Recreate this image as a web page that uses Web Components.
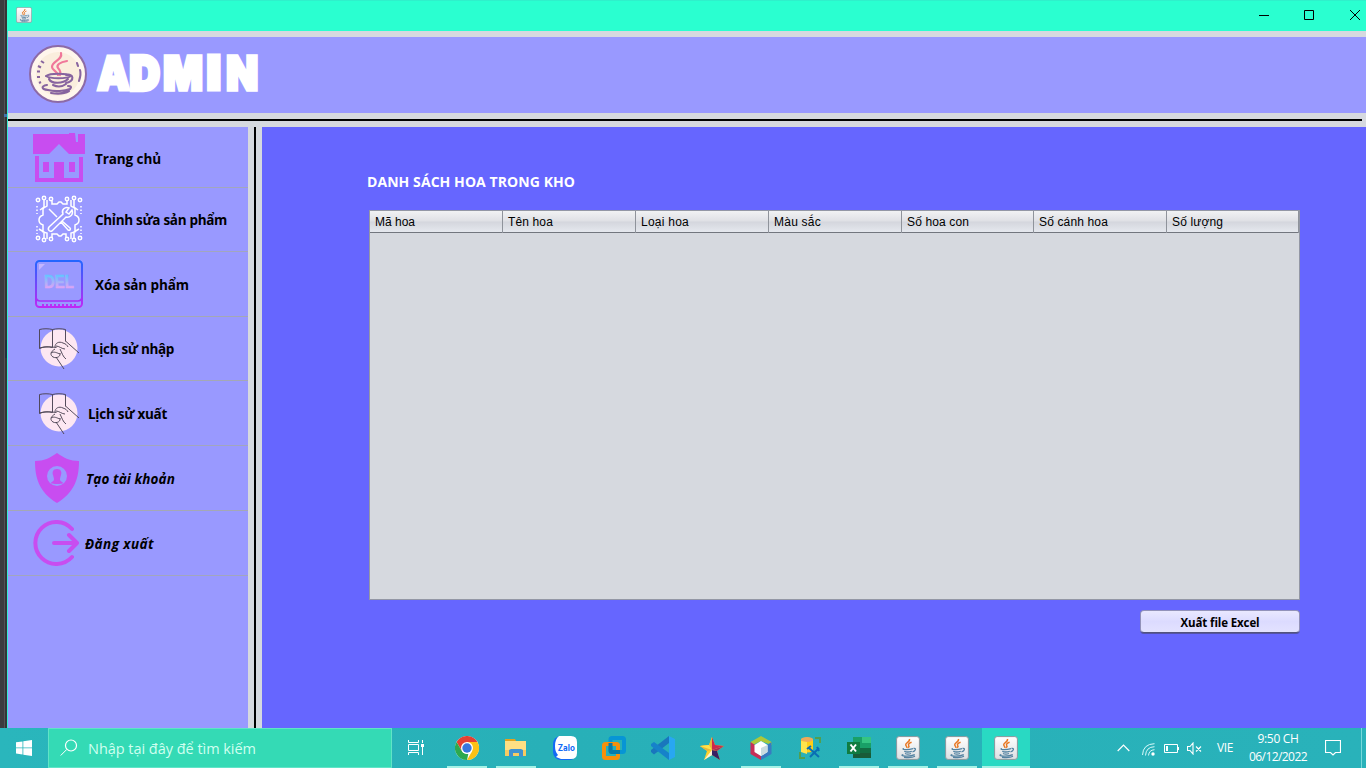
<!DOCTYPE html>
<html lang="vi"><head><meta charset="utf-8"><title>Admin</title>
<style>html,body{margin:0;height:100%;overflow:hidden;background:#3b3b3c}body{font-family:"Open Sans","Noto Sans",sans-serif}</style></head>
<body><desktop-screen></desktop-screen>
<script>
const icons={
java:`<svg viewBox="0 0 24 24"><defs><linearGradient id="g" x2="0" y2="1"><stop stop-color="#fff"/><stop offset="1" stop-color="#dcdfe2"/></linearGradient></defs><rect x=".6" y=".6" width="22.8" height="22.8" rx="2.5" fill="url(#g)" stroke="#8b979d"/><g fill="none" stroke="#e87722" stroke-width="1.5"><path d="M13.4 3c1.2 2.8-4 3.5-3.7 5.8.1 1.300 1.500 1.600 1.200 3.200M15.600 6.200c-2.500.8-3.700 2-2.900 3.200.8 1 .2 1.700-.5 2.300"/></g><g fill="none" stroke="#5382a1" stroke-width="1.300"><path d="M8 12.500c-3.500 1 3.500 1.700 9 .1M8.300 15.200c1.700 1 5.200.8 7.500.1M9 17.500c1.500.8 4.300.7 6 0M17.500 12.400c3-.7 2.300 2.700-1 3.400M7.300 18.500c-5 1.500 6 2.700 11.500.2M8 21.300c4 .5 9 .1 11-1"/></g></svg>`,
badge:`<svg viewBox="0 0 58 58"><circle cx="29" cy="29" r="28" fill="#fff6ec" stroke="#8d6aa6" stroke-width="2"/><circle cx="29" cy="29" r="22" fill="#faeedd"/><g fill="none" stroke="#f0779a" stroke-width="2.200" stroke-linecap="round"><path d="M32 8c2 7-9 8-9 14 0 3 5 4 6 8M38 16c-7 1-11 4-9 7 2 2 3 4 2 7"/></g><g fill="none" stroke="#87649f" stroke-width="2.100" stroke-linecap="round"><path d="M17 31c4-3 21-3 25 0-4 3-21 3-25 0M20 34c2 5 14 5 19 0M24 40c4 2 9 2 13-1M37 30c8-2 9 6 0 8M18 40c-6 1-6 4 1 5 7 2 17 1 22-1 2-2 1-3-2-3M22 48c6 1 13 1 18-2M48 18l1 3M51 25c1 3 0 8-1 11"/></g><path d="M12 16l3 2M9 21l3 1.500M8 26.500h3M8 32h3M10 38l2-1" stroke="#87649f" stroke-width="2"/></svg>`,
home:`<svg viewBox="0 0 52 50"><g fill="#c84df0"><path d="M0 2h36V1h6l1 9h2V2h7v20H36L26 12 16 22H0zM2 24h4v22h15V30h10v16h15V25h4v25H2z"/><path d="M10 30h6v10h-6zM36 30h6v10h-6z"/></g></svg>`,
tools:`<svg viewBox="0 0 48 48"><g fill="none" stroke="#fff" stroke-width="1.500"><path d="M17 6v3h5l2-2h2l2 2h4V6M12 5v6c-1 1-3 1-4 3v6c-3 1-4 3-4 5s1 4 4 5v7l4 1v6M36 5v6c1 1 3 1 4 3v6c3 1 4 3 4 5s-1 4-4 5v7l-4 1v6M17 43v-4h5l2 2h2l2-2h3v4M9 4v8l-4 3M39 4v8l4 3M9 44v-7l-5-3M39 44v-7l5-3"/><g fill="#9999ff"><circle cx="3" cy="5" r="1.700"/><circle cx="9" cy="3" r="1.700"/><circle cx="16" cy="4" r="1.700"/><circle cx="32" cy="4" r="1.700"/><circle cx="39" cy="3" r="1.700"/><circle cx="45" cy="5" r="1.700"/><circle cx="3" cy="43" r="1.700"/><circle cx="9" cy="45" r="1.700"/><circle cx="16" cy="44" r="1.700"/><circle cx="32" cy="44" r="1.700"/><circle cx="39" cy="45" r="1.700"/><circle cx="45" cy="43" r="1.700"/></g><path d="M14 14l8 8M26 27l7 8c2 1 3-1 2-2l-8-7M14 32l14-13c-2-4 2-8 6-6l-3 4 3 2 3-4c2 5-3 8-6 7L17 36c-2 1-5-1-3-4z"/><path stroke-dasharray="1.500 2" d="M2 11v8M46 11v8M2 31v8M46 31v8"/></g></svg>`,
del:`<svg viewBox="0 0 48 48"><defs><linearGradient id="d" x2="0" y2="1"><stop stop-color="#2366ff"/><stop offset="1" stop-color="#be28f5"/></linearGradient><linearGradient id="e" x2="0" y2="1"><stop offset=".2" stop-color="#64c5ff"/><stop offset=".8" stop-color="#dda3f4"/></linearGradient></defs><rect x="1" y="1" width="46" height="46" rx="3.500" fill="none" stroke="url(#d)" stroke-width="2"/><path d="M1 38q1 3 4 3h38q3 0 4-3" fill="none" stroke="#a72ef8" stroke-width="1.700"/><path d="M7 45h34" stroke="#ba2ef8" stroke-width="2" stroke-dasharray="2 2"/><path d="M4 4h6L4 10z" fill="#c4b5ff"/><text x="9" y="28" font-family="Liberation Sans" font-weight="bold" font-size="19" textLength="30" lengthAdjust="spacingAndGlyphs" fill="url(#e)" stroke="url(#e)" stroke-width=".5">DEL</text></svg>`,
book:`<svg viewBox="0 0 42 42"><circle cx="21" cy="20" r="18.500" fill="#fde7f2"/><g fill="none" stroke="#4c4353" stroke-width=".95"><path d="M1.500 1.500c4-1 9-1 13 0v18c-4-1-9-1-13 1zM14.500 1.500c4-1 9-1 13 0v12M1.500 20c6-2 12-1 17-.500M27.500 13l13.500 12M17 19c0-4 4-6 8-4 3 1 4 2 5 4M18 18c3 0 6 3 9 3M17 21c-5 3-5 6-2 8 4 2 8-1 7-4M13 25c3-2 6 0 9 1M22 21c2 4 3 8 6 10M18 29l8 12"/></g></svg>`,
shield:`<svg viewBox="0 0 44 50"><path d="M22 0C15 5 9 8 0 8c0 17 4 31 22 42C40 39 44 25 44 8 35 8 29 5 22 0z" fill="#c84df0"/><circle cx="22" cy="23" r="10" fill="#9999ff"/><path fill="#c84df0" d="M22 16c-4 0-5 3-4 6 1 4 2 5-1 7-2 1-1 2 5 2s7-1 5-2c-3-2-2-3-1-7 1-3 0-6-4-6z"/></svg>`,
logout:`<svg viewBox="0 0 46 46"><path d="M39 9A21 21 0 1 0 39 37M21 23h23M36 15l8 8-8 8" fill="none" stroke="#c84df0" stroke-width="4" stroke-linecap="round" stroke-linejoin="round"/></svg>`,
chrome:`<svg viewBox="0 0 24 24"><circle cx="12" cy="12" r="12" fill="#fff"/><path fill="#e34133" d="M12 12V6h10.400A12 12 0 0 0 1.600 6l5.200 9z"/><path fill="#fbc116" d="M12 6h10.400a12 12 0 0 1-10.400 18l5.200-9z"/><path fill="#2da94f" d="M1.600 6l5.200 9c1.500 2 3.500 3 6.500 3L12 24A12 12 0 0 1 1.600 6z"/><circle cx="12" cy="12" r="6" fill="#fff"/><circle cx="12" cy="12" r="4.700" fill="#3777df"/></svg>`,
files:`<svg viewBox="0 0 24 24"><path fill="#e3a31e" d="M1 3h10l1 2h10v6H1z"/><path fill="#ffe083" d="M1 5h21v15H1z"/><path fill="#f8cb62" d="M1 14h21v6H1z"/><path fill="#3f92d1" d="M5 21v-7l2-1h10l2 1v7h-4v-4H9v4z"/></svg>`,
zalo:`<svg viewBox="0 0 24 24"><rect width="24" height="24" rx="8" fill="#126af6"/><path fill="#fff" d="M6 0h12q6 0 6 6v11q0 6-6 6H8l-5-2 2-2q-3-3-3-9 0-7 4-10z"/><text x="4.800" y="14.500" font-family="Inter" font-weight="700" font-size="8.500" textLength="17" lengthAdjust="spacingAndGlyphs" fill="#126af6">Zalo</text></svg>`,
vm:`<svg viewBox="0 0 24 24"><rect x="8.500" y="2" width="13.500" height="14" rx="1.500" fill="none" stroke="#0795d5" stroke-width="4"/><rect x="2" y="8" width="14" height="14" rx="1.500" fill="none" stroke="#f6900b" stroke-width="4"/><path d="M8.500 7v7.500q0 1.500 1.500 1.500h8" fill="none" stroke="#087aa9" stroke-width="4"/></svg>`,
vs:`<svg viewBox="0 0 24 24"><path fill="#1976bd" d="M18 0v7L3 18.500 0 16v-2z"/><path fill="#1682ca" d="M18 24v-7L3 6 0 8v2z"/><path fill="#28a7f2" d="M18 0l6 3v18l-6 3z"/></svg>`,
star:`<svg viewBox="0 0 24 24"><path d="M12 1l3 8 9 1-7 5 3 9-8-5-8 5 3-9-7-5 9-1z" fill="#ffd12d"/><path fill="#cc294c" d="M12 1l3 8 9 1-12 4z"/><path fill="#392064" d="M12 14l5 1 3 9-8-5z"/><path fill="#a72c58" d="M12 14l12-4-7 5z"/><path fill="#e8b83a" d="M12 1v13L7 15l-7-5 9-1z"/><path fill="#ffe34a" d="M0 10l12 4-3-5z"/><path fill="#fff3d7" d="M12 14l-8 10 8-5z"/></svg>`,
cube:`<svg viewBox="0 0 24 24"><path fill="#adc839" d="M12 0l10.500 6v3L12 5 4 9 1.500 6z"/><path fill="#c92e57" d="M1.500 6L6 9v7l6 4v4L1.500 18z"/><path fill="#397bc0" d="M22.500 6v12L12 24v-4l6-4V9z"/><path fill="#fff" d="M12 5l6.500 4v7L12 20l-6.500-4V9z"/><path fill="#cbdce0" d="M12 12l6.500-3v7L12 20z"/></svg>`,
db:`<svg viewBox="0 0 24 24"><path d="M3 3q6-3 12 0v12q-6 3-12 0z" fill="#ffcd16"/><ellipse cx="9" cy="3.500" rx="6" ry="2.500" fill="#efaa5b"/><path d="M3 5v11l6 2V6z" fill="#ffe44d"/><path d="M17 2h5v5M2 16v6h5" fill="none" stroke="#519f50" stroke-width="2"/><path d="M12 21l9-9M11 12l10 9M9 13l4-3M19 11l2 4" fill="none" stroke="#096eb4" stroke-width="2"/></svg>`,
excel:`<svg viewBox="0 0 24 24"><path fill="#19a067" d="M6 1h18v21H6z"/><path fill="#35c582" d="M15 1h9v6h-9z"/><path fill="#126d42" d="M6 12h18v5H6z"/><path fill="#195b38" d="M6 17h18v5H6z"/><path fill="#107c41" d="M0 6h13v12H0z"/><path d="M3.500 8.500l5.500 7M9 8.500l-5.500 7" stroke="#fff" stroke-width="2"/></svg>`,
windows:`<svg viewBox="0 0 16 16"><path fill="#fff" d="M0 2.300l6.500-.9v6.100H0zM7.300 1.300L16 0v7.500H7.300zM0 8.300h6.500v6.200L0 13.600zM7.300 8.300H16V16l-8.700-1.300z"/></svg>`,
search:`<svg viewBox="0 0 18 18"><path d="M.7 16.500l6-6" stroke="#fff"/><circle cx="11" cy="6.500" r="5.500" fill="none" stroke="#fff" stroke-width="1.200"/></svg>`,
task:`<svg viewBox="0 0 17 17"><path d="M.5 1v2.500h10V1M.5 5.500h10v6H.5zM.5 16v-2.500h10V16M14.500 1v3M14.500 8v8" fill="none" stroke="#fff"/><path d="M13 5h3v3h-3z" fill="#fff"/></svg>`,
up:`<svg viewBox="0 0 13 8"><path d="M.7 7l5.800-5.800L12.300 7" fill="none" stroke="#fff" stroke-width="1.200"/></svg>`,
wifi:`<svg viewBox="0 0 13 13"><path d="M.5 12Q1 1 12.500.7M3.500 12.500Q4 4 12.500 3.700M6.500 12.500Q7 7 12.500 6.700" fill="none" stroke="#d8fafa"/><circle cx="11" cy="11" r="1.700" fill="#fff"/></svg>`,
battery:`<svg viewBox="0 0 15 10"><path d="M.5.5h13v8H.5zM14.500 3v3" fill="none" stroke="#fff"/><path d="M2 2h2v5H2z" fill="#fff"/></svg>`,
mute:`<svg viewBox="0 0 15 13"><path d="M.5 4.500H3l3-3.500v11L3 8.500H.5zM9 4.500l5 5M14 4.500l-5 5" fill="none" stroke="#fff" stroke-width="1.100"/></svg>`,
note:`<svg viewBox="0 0 16 17"><path d="M.5.500h15v12h-5L8 15l-2.500-2.500h-5z" fill="none" stroke="#fff" stroke-width="1.200"/></svg>`,
min:`<svg viewBox="0 0 10 10"><path d="M0 5.500h10" stroke="#000"/></svg>`,
max:`<svg viewBox="0 0 10 10"><path d="M.5.5h9v9h-9z" fill="none" stroke="#000"/></svg>`,
close:`<svg viewBox="0 0 10 10"><path d="M0 0l10 10M10 0L0 10" stroke="#000"/></svg>`
};
const define=(name,css,markup)=>customElements.define(name,class extends HTMLElement{
 connectedCallback(){if(this.shadowRoot)return;this.attachShadow({mode:'open'}).innerHTML=`<style>*{box-sizing:border-box}${css}</style>${typeof markup==='function'?markup(this):markup}`}
});
define('ui-icon',':host{display:block;flex:none}svg{display:block;width:100%;height:100%}',e=>icons[e.getAttribute('name')]);
customElements.define('fit-text',class extends HTMLElement{connectedCallback(){
 this.attachShadow({mode:'open'}).innerHTML='<style>:host{display:inline-block;white-space:nowrap}</style><slot></slot>';
 const n=[...this.textContent].length;this.style.letterSpacing=(+this.getAttribute('w')-this.getBoundingClientRect().width)/n+'px';
}});
define('window-bar',':host{display:flex;height:31px;background:#2affd0;align-items:center;padding-left:9px;box-shadow:inset 0 1px #2ff0cb}ui-icon{width:16px;height:16px;margin-top:-1px}.a{margin-left:auto;display:flex;gap:35px;padding-right:6px}.a ui-icon{width:10px;height:10px}.a ui-icon:last-child{margin-left:1px}',
 `<ui-icon name="java"></ui-icon><div class="a"><ui-icon name="min"></ui-icon><ui-icon name="max"></ui-icon><ui-icon name="close"></ui-icon></div>`);
define('admin-header',':host{display:flex;height:76px;background:#99f;align-items:center;padding-left:21px;gap:9px}ui-icon{width:58px;height:58px;margin-top:-2px}svg{display:block;width:200px;height:76px;overflow:visible}',
 `<ui-icon name="badge"></ui-icon><svg><text transform="scale(.88 1)" x="1 38.500 76.500 127.500 148" y="53.500" font-family="Inter" font-weight="900" font-size="47" fill="#fff" stroke="#fff" stroke-width="3.500"><tspan font-size="47" stroke-width="3">A</tspan><tspan stroke-width="4.500">D</tspan>M<tspan font-size="43" y="51.500" stroke-width="7">I</tspan><tspan y="53.500">N</tspan></text></svg>`);
define('nav-item',':host{display:flex;align-items:center;height:var(--h);border-bottom:1px solid var(--line,#a2a3cd);font-weight:700;font-size:13.500px;color:#000;padding-left:var(--x);gap:var(--gap)}ui-icon{width:var(--iw);height:var(--ih);position:relative;top:var(--iy,0)}slot{display:block;padding-top:var(--ty,2px)}',
 e=>`<ui-icon name="${e.getAttribute('icon')}"></ui-icon><slot></slot>`);
const navs=[['home','Trang chủ',66,61,25,52,50,10,0,0,4],['tools','Chỉnh sửa sản phẩm',132,64,27,48,48,12,0,-1,1],['del','Xóa sản phẩm',94,65,27,48,48,12,0,0,2],['book','Lịch sử nhập',82,64,30,42,42,12,0,0,1],['book','Lịch sử xuất',79,65,30,42,42,8,0,1,2],['shield','Tạo tài khoản',89,65,27,44,50,7,1,0,2],['logout','Đăng xuất',69,65,25,46,46,6,1,0,2]];
define('side-nav',':host{display:block;background:#99f;height:601px}',()=>navs.map((n,i)=>`<nav-item icon="${n[0]}" style="--h:${n[3]}px;--x:${n[4]}px;--iw:${n[5]}px;--ih:${n[6]}px;--gap:${n[7]}px;--iy:${n[9]}px;--ty:${n[10]}px;--line:${[2,3,5].includes(i)?'#a4a8b4':'#a2a6bd'};${n[8]?'font-style:italic':''}"><fit-text w="${n[2]}">${n[1]}</fit-text></nav-item>`).join(''));
define('flower-table',':host{display:block;width:931px;height:390px;border:1px solid #9397a5;background:#d6d9df;font:12px/22px "Liberation Sans",sans-serif;color:#000}.head{height:22px;display:grid;grid-template-columns:133px 133px 133px 133px 132px 133px 1fr;border-bottom:1px solid #72767e;background:linear-gradient(#f1f2f4,#dfe0e5 48%,#d4d6dd 52%,#e5e8ee)}.head div{padding-left:5px;border-right:1px solid #8f939b}',
 `<div class="head">${[['Mã hoa',40],['Tên hoa',45],['Loại hoa',48],['Màu sắc',47],['Số hoa con',62],['Số cánh hoa',69],['Số lượng',51]].map(x=>`<div><fit-text w="${x[1]}">${x[0]}</fit-text></div>`).join('')}</div>`);
define('push-button',':host{display:flex;width:160px;height:23px;border-radius:4px;border:1px solid #9292ba;border-bottom-color:#53537c;background:linear-gradient(#e9e8ff,#dcdbff 50%,#e3e2ff);align-items:center;justify-content:center;font-weight:700;font-size:11.500px;color:#000;box-shadow:0 1px #5353a6;padding-top:2px;box-sizing:border-box}','<slot></slot>');
define('stock-panel',':host{display:block;background:#66f;padding:45px 66px 0 105px;height:601px;box-sizing:border-box}h1{margin:0 0 19px;font-size:14px;line-height:19px;font-weight:700;color:#fff}flower-table{margin-left:2px;box-sizing:border-box}push-button{margin:10px 0 0 auto}',
 `<h1><fit-text w="208">DANH SÁCH HOA TRONG KHO</fit-text></h1><flower-table></flower-table><push-button><fit-text w="79">Xuất file Excel</fit-text></push-button>`);
define('app-window',':host{display:block;height:728px;background:#d6d9df}.rule{height:14px;padding:6px 4px 6px 0}.rule div{height:2px;background:#000}.top{padding:6px 0 0}.body{display:grid;grid-template-columns:240px 14px 1fr}.v{padding:0 6px}.v div{height:601px;background:#000}.content{border-left:1px solid #36ecd1;height:697px}',
 `<window-bar></window-bar><div class="content"><div class="top"><admin-header></admin-header></div><div class="rule"><div></div></div><div class="body"><side-nav></side-nav><div class="v"><div></div></div><stock-panel></stock-panel></div></div>`);
define('task-app',':host{display:flex;width:48px;height:40px;align-items:center;justify-content:center}:host([open]){background:linear-gradient(#a6f2e6,#a6f2e6) center bottom/40px 2px no-repeat}:host([active]){background:linear-gradient(#a6f2e6,#a6f2e6) center bottom/48px 2px no-repeat #29d9c3}ui-icon{width:24px;height:24px}',e=>`<ui-icon name="${e.getAttribute('name')}"></ui-icon>`);
define('task-bar',':host{display:flex;height:40px;background:linear-gradient(90deg,#2ab6bc,#28b0b8 40%,#29b2ba);color:#fff}.start{width:48px;display:grid;place-items:center}.start ui-icon{width:16px;height:16px}.search{width:344px;display:flex;align-items:center;padding-left:11px;gap:10px;background:#34dab5;border:1px solid #60e4c7;font-size:14.500px;color:#d0fff0}.search ui-icon{width:18px;height:18px}.task{width:51px;padding:11px 0 0 16px}.task ui-icon{width:17px;height:17px}.apps{display:flex;gap:1px}.tray{margin-left:auto;display:flex;align-items:center;font-size:12px}.clock{width:60px;text-align:center;line-height:18px}.end{width:5px;height:40px;border-left:1px solid #76dadb}',
 `<div class="start"><ui-icon name="windows"></ui-icon></div><div class="search"><ui-icon name="search"></ui-icon><fit-text w="168">Nhập tại đây để tìm kiếm</fit-text></div><div class="task"><ui-icon name="task"></ui-icon></div><div class="apps">${['chrome','files','zalo','vm','vs','star','cube','db','excel','java','java','java'].map((n,i)=>`<task-app name="${n}" ${[0,1,6,8,9,10].includes(i)?'open':i==11?'active':''}></task-app>`).join('')}</div><div class="tray"><ui-icon name="up" style="width:13px;height:8px;margin-right:12px"></ui-icon><ui-icon name="wifi" style="width:13px;height:13px;margin-right:9px;margin-top:2px"></ui-icon><ui-icon name="battery" style="width:15px;height:10px;margin-right:8px;margin-top:2px"></ui-icon><ui-icon name="mute" style="width:15px;height:13px;margin-right:15px"></ui-icon><fit-text w="16" style="margin-top:-1px">VIE</fit-text><div class="clock" style="margin-left:15px"><fit-text w="41">9:50 CH</fit-text><fit-text w="58">06/12/2022</fit-text></div><ui-icon name="note" style="width:16px;height:17px;margin:0 20px 0 17px"></ui-icon><div class="end"></div></div>`);
define('desktop-screen',':host{display:block;width:1366px;height:768px;overflow:hidden}.screen{display:grid;grid-template-columns:7px 1fr;grid-template-rows:728px 40px}.edge{background:linear-gradient(90deg,#3b3c3e 0 4px,#525355 4px 5px,#343537 5px);display:flex;flex-direction:column;align-items:end}.edge i{display:block;width:3px;height:3px;margin-top:114px;background:#4272ac}.edge b{display:block;width:2px;height:18px;margin-top:223px;background:#242c3d}task-bar{grid-column:1/3}',
 '<div class="screen"><div class="edge"><i></i><b></b></div><app-window></app-window><task-bar></task-bar></div>');
</script></body></html>
